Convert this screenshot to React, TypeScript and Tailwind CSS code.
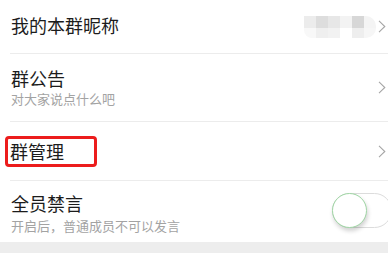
const font = { fontFamily: '"Noto Sans CJK SC", "Noto Sans", sans-serif' };

function Chevron() {
  return (
    <svg width="8" height="13" viewBox="0 0 8 13" className="shrink-0">
      <path d="M1 0.8 L6.8 6.5 L1 12.2" fill="none" stroke="#a6a6a6" strokeWidth="1.1" />
    </svg>
  );
}

function Mosaic() {
  const top = ["#ececec", "#dddddd", "#e7e7e7", "#f3f3f3", "#d7d7d7", "#f4f4f4"];
  const bottom = ["#f8f8f8", "#efefef", "#f2f2f2", "#ffffff", "#eeeeee", "#f6f6f6"];
  return (
    <div className="flex flex-col overflow-hidden rounded-r-[10px] rounded-bl-[8px]">
      <div className="flex">
        {top.map((c, i) => (
          <div key={i} className="h-[12px] w-[12px]" style={{ backgroundColor: c }} />
        ))}
      </div>
      <div className="flex">
        {bottom.map((c, i) => (
          <div key={i} className="h-[10px] w-[12px]" style={{ backgroundColor: c }} />
        ))}
      </div>
    </div>
  );
}

export default function App() {
  return (
    <div className="w-[388px] h-[253px] overflow-hidden bg-[#ededed]" style={font}>
      <div className="bg-white pl-[10px]">
        <div className="flex h-[54px] items-center justify-between border-b border-[#ececec] pr-[2px] pb-[3px]">
          <span className="pl-[1px] text-[18px] leading-none text-[#1c1c1c]">我的本群昵称</span>
          <div className="flex items-center gap-[2px] pt-[3px]">
            <Mosaic />
            <Chevron />
          </div>
        </div>
        <div className="flex h-[68px] items-center justify-between border-b border-[#ececec] pr-[2px]">
          <div className="flex flex-col pl-[1px] pb-[2px]">
            <span className="text-[18px] leading-[22px] text-[#1c1c1c]">群公告</span>
            <span className="mt-[2px] text-[13px] leading-[16px] text-[#a3a3a3]">对大家说点什么吧</span>
          </div>
          <Chevron />
        </div>
        <div className="flex h-[59px] items-center justify-between border-b border-[#ececec] pr-[2px]">
          <div className="-ml-[5px] flex h-[31px] w-[92px] items-center rounded-[4px] border-[3px] border-[#ec1c1c] pl-[2px]">
            <span className="text-[18px] leading-none text-[#1c1c1c]">群管理</span>
          </div>
          <Chevron />
        </div>
        <div className="flex h-[61px] items-center justify-between">
          <div className="flex flex-col pl-[1px] pt-[2px]">
            <span className="text-[18px] leading-[22px] text-[#1c1c1c]">全员禁言</span>
            <span className="mt-[4px] text-[13px] leading-[16px] text-[#a3a3a3]">开启后，普通成员不可以发言</span>
          </div>
          <div className="relative -mr-[4px] mb-[2px] h-[35px] w-[60px] shrink-0 rounded-full border border-[#dcdcdc] bg-white">
            <div className="absolute -left-px -top-px h-[35px] w-[35px] rounded-full border border-[#9fd6a4] bg-white shadow-[1px_3px_4px_rgba(0,0,0,0.18)]" />
          </div>
        </div>
      </div>
    </div>
  );
}
